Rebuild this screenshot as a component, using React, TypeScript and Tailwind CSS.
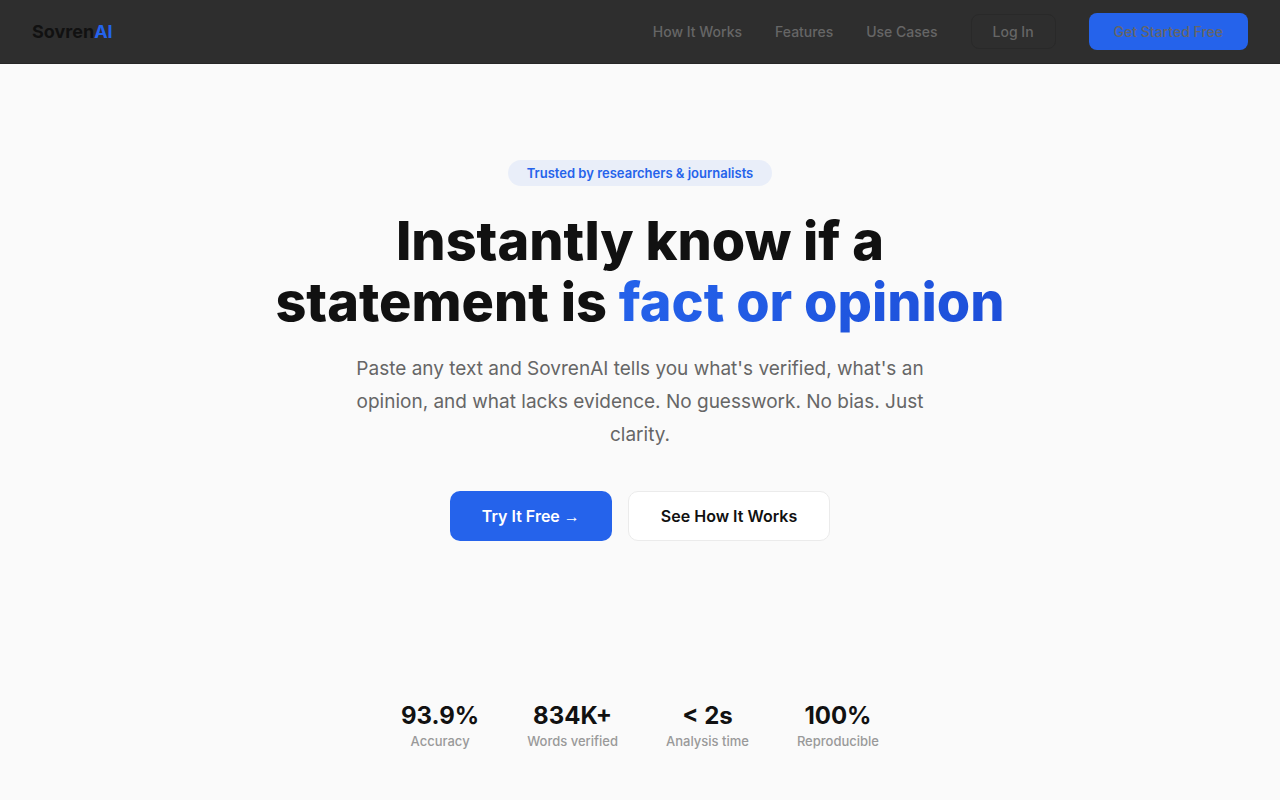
import React from "react";

const navLinks = [
  { label: "How It Works", href: "#how-it-works" },
  { label: "Features", href: "#features" },
  { label: "Use Cases", href: "#use-cases" },
];

const stats = [
  { value: "93.9%", label: "Accuracy" },
  { value: "834K+", label: "Words verified" },
  { value: "< 2s", label: "Analysis time" },
  { value: "100%", label: "Reproducible" },
];

function Navbar() {
  return (
    <header className="bg-[#2e2e2e] border-b border-[#262626]">
      <nav className="flex items-center justify-between h-[63px] px-8">
        <a href="#" className="text-lg font-bold text-[#111111]">
          Sovren<span className="text-[#2563eb]">AI</span>
        </a>
        <div className="flex items-center gap-[33px] text-sm leading-[21px] font-medium text-[#666666]">
          {navLinks.map((link) => (
            <a key={link.label} href={link.href}>
              {link.label}
            </a>
          ))}
          <a
            href="#login"
            className="px-[21px] py-1.5 border border-[#292929] rounded-lg"
          >
            Log In
          </a>
          <a href="#signup" className="px-[25px] py-2 bg-[#2563eb] rounded-lg">
            Get Started Free
          </a>
        </div>
      </nav>
    </header>
  );
}

function Hero() {
  return (
    <section className="flex flex-col items-center px-8 pt-24 pb-24 text-center">
      <span className="px-[19px] py-1 mb-6 rounded-full bg-[#e9eef9] text-[13px] leading-[18px] font-semibold text-[#2563eb]">
        Trusted by researchers & journalists
      </span>
      <h1 className="max-w-[800px] mb-5 text-[54px] leading-[61px] font-extrabold text-[#111111]">
        Instantly know if a <br />
        statement is{" "}
        <span className="bg-linear-135 from-[#2563eb] to-[#1d4ed8] bg-clip-text text-transparent">
          fact or opinion
        </span>
      </h1>
      <p className="max-w-[600px] mb-10 text-[19px] leading-[33px] text-[#666666]">
        Paste any text and SovrenAI tells you what's verified, what's an
        opinion, and what lacks evidence. No guesswork. No bias. Just clarity.
      </p>
      <div className="flex flex-wrap justify-center gap-4 text-base font-semibold">
        <a
          href="#try"
          className="px-8 py-[13px] rounded-[10px] bg-[#2563eb] text-white"
        >
          Try It Free{" "}
          <span className="font-['Liberation_Sans',sans-serif] font-normal leading-none">
            →
          </span>
        </a>
        <a
          href="#how-it-works"
          className="px-8 py-3 rounded-[10px] border border-[#ebebeb] bg-white text-[#111111]"
        >
          See How It Works
        </a>
      </div>
    </section>
  );
}

function Stats() {
  return (
    <section className="flex flex-wrap justify-center gap-12 px-8 pt-16 pb-12 text-center">
      {stats.map((stat) => (
        <div key={stat.label}>
          <div className="text-2xl leading-[30px] font-bold text-[#111111]">
            {stat.value}
          </div>
          <div className="text-[13px] leading-[21px] font-medium text-[#999999]">
            {stat.label}
          </div>
        </div>
      ))}
    </section>
  );
}

export default function App() {
  return (
    <div className="min-h-screen bg-[#fafafa] font-['Inter',sans-serif] antialiased">
      <Navbar />
      <main>
        <Hero />
        <Stats />
      </main>
    </div>
  );
}
